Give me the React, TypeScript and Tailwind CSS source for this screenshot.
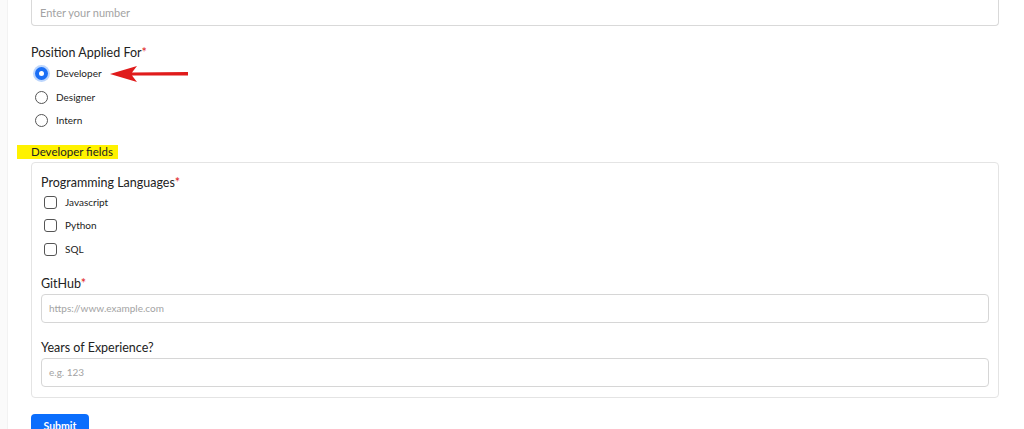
import React from 'react';

const font = { fontFamily: 'Lato, "Noto Sans", sans-serif' };

function Radio({ label, checked }: { label: string; checked?: boolean }) {
  return (
    <label className="flex items-center h-[23.5px] pl-[4px]">
      {checked ? (
        <span className="w-[13px] h-[13px] rounded-full bg-[#1a6ef5] flex items-center justify-center shadow-[0_0_0_2px_#bcd6fd]">
          <span className="w-[5px] h-[5px] rounded-full bg-white" />
        </span>
      ) : (
        <span className="w-[13px] h-[13px] rounded-full border border-[#555] bg-white" />
      )}
      <span className="ml-[8px] text-[10px] text-[#222]">{label}</span>
    </label>
  );
}

function Check({ label }: { label: string }) {
  return (
    <label className="flex items-center h-[23.5px] pl-[3px]">
      <span className="w-[13px] h-[13px] rounded-[3px] border border-[#555] bg-white" />
      <span className="ml-[8px] text-[10px] text-[#222]">{label}</span>
    </label>
  );
}

export default function App() {
  return (
    <div className="w-[1024px] h-[429px] overflow-hidden bg-white flex" style={font}>
      <div className="w-[8px] shrink-0 bg-[#fafafa] border-r border-[#f2f2f2]" />
      <div className="flex-1 pl-[23px] pr-[25px]">
        <div className="h-[27px] -mt-[1px] border border-t-0 border-[#d9d9d9] rounded-b-[4px] flex items-center pl-[8px]">
          <span className="text-[11px] text-[#a3a3a3] mt-[2px]">Enter your number</span>
        </div>

        <div className="mt-[20px] h-[14px] flex items-center text-[12.5px] text-[#222]">
          <span>
            Position Applied For<span className="text-[#e02020]">*</span>
          </span>
        </div>
        <div className="mt-[2px] relative">
          <Radio label="Developer" checked />
          <Radio label="Designer" />
          <Radio label="Intern" />
          <div className="absolute left-[79px] top-[4px] flex items-center">
            <svg width="80" height="16" viewBox="0 0 80 16">
              <polygon points="0,8 27,0 22,6.5 78,6 78,9.5 22,9.5 27,16" fill="#e01b1b" />
            </svg>
          </div>
        </div>

        <div className="mt-[12px] -ml-[14px] flex">
          <div className="bg-[#fff200] pl-[14px] pr-[5px] h-[14px] flex items-center text-[11.5px] text-[#222]">
            Developer fields
          </div>
        </div>

        <div className="mt-[3px] border border-[#e4e4e4] rounded-[4px] h-[236px] px-[9px] pt-[14px]">
          <div className="h-[14px] flex items-center text-[12.5px] text-[#222]">
            <span>
              Programming Languages<span className="text-[#e02020]">*</span>
            </span>
          </div>
          <div className="mt-[0px]">
            <Check label="Javascript" />
            <Check label="Python" />
            <Check label="SQL" />
          </div>

          <div className="mt-[16px] h-[14px] flex items-center text-[12.5px] text-[#222]">
            <span>
              GitHub<span className="text-[#e02020]">*</span>
            </span>
          </div>
          <div className="mt-[3px] h-[29px] border border-[#d6d6d6] rounded-[4px] flex items-center pl-[7px]">
            <span className="text-[10px] text-[#a3a3a3]">https://www.example.com</span>
          </div>

          <div className="mt-[18px] h-[14px] flex items-center text-[12.5px] text-[#222]">Years of Experience?</div>
          <div className="mt-[3px] h-[29px] border border-[#d6d6d6] rounded-[4px] flex items-center pl-[7px]">
            <span className="text-[10px] text-[#a3a3a3]">e.g. 123</span>
          </div>
        </div>

        <button className="mt-[16px] w-[58px] h-[30px] bg-[#0b6efd] rounded-[4px] text-white text-[10.5px] font-bold flex justify-center pt-[6px] leading-[12px]">
          Submit
        </button>
      </div>
    </div>
  );
}
